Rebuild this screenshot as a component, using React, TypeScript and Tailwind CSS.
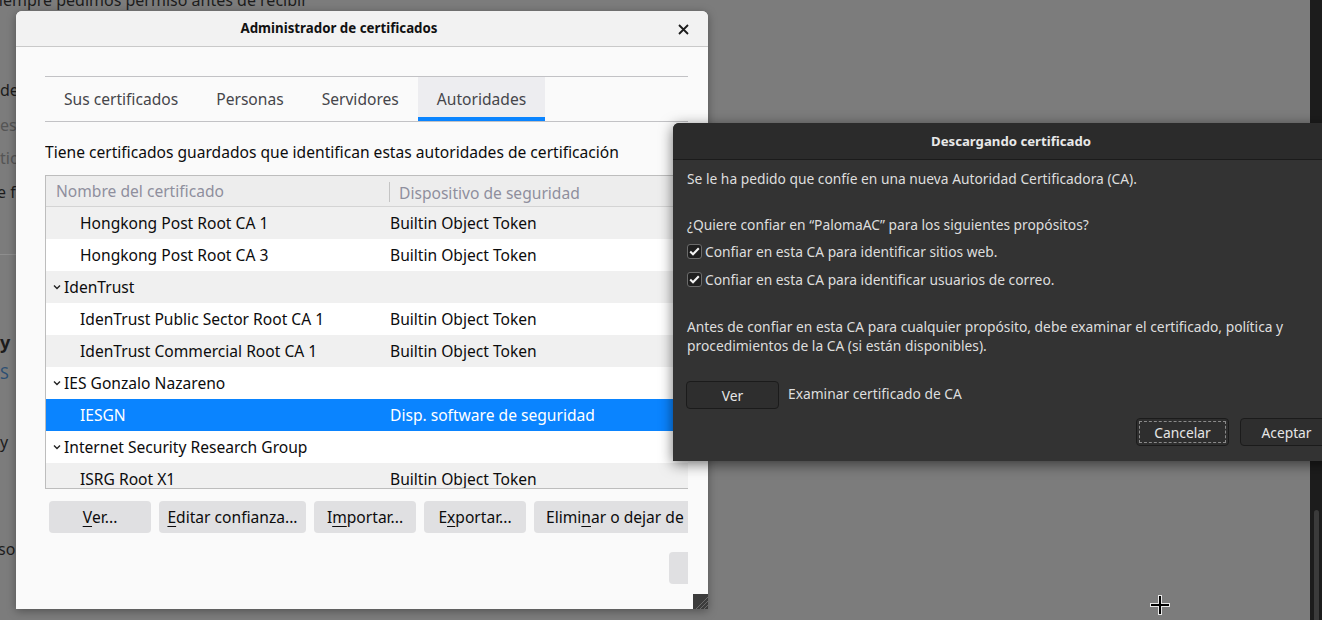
import React from 'react';

type Row = {
  name: string;
  device?: string;
  group?: boolean;
  selected?: boolean;
};

const rows: Row[] = [
  { name: 'Hongkong Post Root CA 1', device: 'Builtin Object Token' },
  { name: 'Hongkong Post Root CA 3', device: 'Builtin Object Token' },
  { name: 'IdenTrust', group: true },
  { name: 'IdenTrust Public Sector Root CA 1', device: 'Builtin Object Token' },
  { name: 'IdenTrust Commercial Root CA 1', device: 'Builtin Object Token' },
  { name: 'IES Gonzalo Nazareno', group: true },
  { name: 'IESGN', device: 'Disp. software de seguridad', selected: true },
  { name: 'Internet Security Research Group', group: true },
  { name: 'ISRG Root X1', device: 'Builtin Object Token' },
];

const tabs = ['Sus certificados', 'Personas', 'Servidores', 'Autoridades'];

function Chevron() {
  return (
    <svg width="8" height="6" viewBox="0 0 8 6" className="mr-[3px]">
      <path d="M1 1.5 L4 4.5 L7 1.5" fill="none" stroke="#222" strokeWidth="1.4" />
    </svg>
  );
}

function GrayButton({ children, className = '' }: { children: React.ReactNode; className?: string }) {
  return (
    <div
      className={`h-[32px] pt-[1px] shrink-0 rounded-[4px] bg-[#e0e0e2] flex items-center justify-center text-[#0c0c0d] whitespace-nowrap ${className}`}
    >
      {children}
    </div>
  );
}

function Check() {
  return (
    <span className="w-[15px] h-[15px] mr-[3px] rounded-[3px] bg-[#1f1f1f] border border-[#6b6b6b] flex items-center justify-center shrink-0">
      <svg width="11" height="9" viewBox="0 0 11 9">
        <path d="M1.2 4.6 L4 7.3 L9.8 1.3" fill="none" stroke="#f4f4f4" strokeWidth="2.1" />
      </svg>
    </span>
  );
}

function DarkButton({ children, focus, className = '' }: { children: React.ReactNode; focus?: boolean; className?: string }) {
  return (
    <div
      className={`h-[28px] w-[93px] shrink-0 rounded-[4px] bg-[#2e2e2e] border border-[#1b1b1b] p-[2px] ${className}`}
    >
      <div
        className={`w-full h-full flex items-center justify-center text-[#e6e6e6] ${
          focus ? 'border border-dashed border-[#8a8a8a]' : ''
        }`}
      >
        {children}
      </div>
    </div>
  );
}

export default function App() {
  return (
    <div
      className="relative w-[1322px] h-[620px] overflow-hidden bg-[#7c7c7c] flex"
      style={{ fontFamily: '"Noto Sans", "Open Sans", sans-serif' }}
    >
      {/* dimmed page behind */}
      <div className="flex-1 flex flex-col text-[16px] leading-[20px] text-[#1c1c1c]">
        <div className="-mt-[10px] -ml-[10px] whitespace-nowrap">Siempre pedimos permiso antes de recibir</div>
        <div className="mt-[70px] whitespace-nowrap">de</div>
        <div className="mt-[15px] whitespace-nowrap text-[#555]">est</div>
        <div className="mt-[13px] whitespace-nowrap text-[#555]">tio</div>
        <div className="mt-[14px] -ml-[3px] whitespace-nowrap">e fa</div>
        <div className="mt-[52px] w-[16px] border-t border-[#8e8e8e]" />
        <div className="mt-[77px] whitespace-nowrap font-bold text-[18px]">y</div>
        <div className="mt-[11px] whitespace-nowrap text-[#2c4f73]">S</div>
        <div className="mt-[49px] whitespace-nowrap">y</div>
        <div className="mt-[87px] -ml-[2px] whitespace-nowrap">so</div>
      </div>
      <div className="w-[12px] bg-[#1c1c1c] flex flex-col justify-end items-center">
        <div className="w-[5px] h-[110px] rounded-t-full bg-[#3b3b3b]" />
      </div>

      {/* Administrador de certificados */}
      <div className="absolute left-[16px] top-[11px] w-[692px] h-[598px] bg-[#fafafa] rounded-t-[6px] shadow-[0_2px_10px_rgba(0,0,0,0.35)] flex flex-col text-[15.6px] text-[#0c0c0d]">
        <div className="relative h-[36px] shrink-0 pt-[1px] pr-[46px] bg-[#f2f2f2] rounded-t-[6px] border-b border-[#c9c9c9] flex items-center justify-center">
          <span className="font-bold text-[13.3px] text-[#111]">Administrador de certificados</span>
          <svg width="11" height="11" viewBox="0 0 11 11" className="absolute right-[19px] top-[13px]">
            <path d="M1 1 L10 10 M10 1 L1 10" stroke="#1c1c1c" strokeWidth="1.8" />
          </svg>
        </div>

        <div className="ml-[29px] mt-[29px] w-[643px] flex-1 overflow-hidden">
          <div className="w-[720px]">
            {/* tabs */}
            <div className="border-t border-b border-[#c2c2c5] flex h-[46px]">
              {tabs.map((t) => {
                const active = t === 'Autoridades';
                return (
                  <div
                    key={t}
                    className={`px-[19px] h-full flex items-center whitespace-nowrap ${
                      active ? 'bg-[#ededf0] border-b-[4px] border-[#0a84ff] pt-[5px]' : 'pt-[1px]'
                    } text-[#45454a]`}
                  >
                    {t}
                  </div>
                );
              })}
            </div>

            <div className="mt-[20px] leading-[20px] whitespace-nowrap">
              Tiene certificados guardados que identifican estas autoridades de certificación
            </div>

            {/* table */}
            <div className="mt-[13px] h-[314px] w-[700px] border border-[#bdbdbd] overflow-hidden bg-white">
              <div className="h-[31px] pt-[1px] bg-[#ededed] border-b border-[#d4d4d4] flex items-center text-[#8f8f9d]">
                <div className="w-[343px] pl-[10px] whitespace-nowrap">Nombre del certificado</div>
                <div className="h-[20px] border-l border-[#c4c4c4] pl-[9px] whitespace-nowrap">Dispositivo de seguridad</div>
              </div>
              {rows.map((r, i) => (
                <div
                  key={r.name}
                  className={`h-[32px] pt-[1px] flex items-center whitespace-nowrap ${
                    r.selected ? 'bg-[#0a84ff] text-white' : i % 2 === 0 ? 'bg-[#f0f0f0]' : 'bg-white'
                  }`}
                >
                  {r.group ? (
                    <div className="pl-[7px] flex items-center">
                      <Chevron />
                      {r.name}
                    </div>
                  ) : (
                    <>
                      <div className="w-[344px] pl-[34px]">{r.name}</div>
                      <div>{r.device}</div>
                    </>
                  )}
                </div>
              ))}
            </div>

            {/* buttons */}
            <div className="mt-[12px] ml-[4px] flex gap-2">
              <GrayButton className="w-[102px]">
                <u className="underline-offset-[3px]">V</u>er...
              </GrayButton>
              <GrayButton className="w-[147px]">
                <u className="underline-offset-[3px]">E</u>ditar confianza...
              </GrayButton>
              <GrayButton className="w-[102px]">
                I<u className="underline-offset-[3px]">m</u>portar...
              </GrayButton>
              <GrayButton className="w-[102px]">
                E<u className="underline-offset-[3px]">x</u>portar...
              </GrayButton>
              <GrayButton className="px-3">
                Elimi<u className="underline-offset-[3px]">n</u>ar o dejar de confiar...
              </GrayButton>
            </div>

            <div className="mt-[19px] pl-[624px] flex">
              <GrayButton className="w-[100px]">Aceptar</GrayButton>
            </div>
          </div>
        </div>

        {/* resize grip */}
        <div className="absolute right-0 bottom-0 w-[15px] h-[15px] bg-[#3c3c3c] overflow-hidden">
          <svg width="15" height="15" viewBox="0 0 15 15">
            <path d="M15 3 L3 15 M15 7 L7 15 M15 11 L11 15" stroke="#6a6a6a" strokeWidth="1" />
          </svg>
        </div>
      </div>

      {/* Descargando certificado */}
      <div className="absolute left-[673px] top-[123px] w-[676px] h-[338px] bg-[#333333] rounded-tl-[6px] shadow-[0_3px_14px_rgba(0,0,0,0.55)] flex flex-col text-[13.8px] text-[#dedede]">
        <div className="h-[37px] shrink-0 pt-[1px] bg-[#2b2b2b] rounded-tl-[6px] border-b border-[#1b1b1b] flex items-center justify-center">
          <span className="font-bold text-[13.2px] text-[#e8e8e8]">Descargando certificado</span>
        </div>
        <div className="pl-[14px] flex flex-col leading-[19px]">
          <div className="mt-[9px] whitespace-nowrap">
            Se le ha pedido que confíe en una nueva Autoridad Certificadora (CA).
          </div>
          <div className="mt-[27px] whitespace-nowrap">
            ¿Quiere confiar en “PalomaAC” para los siguientes propósitos?
          </div>
          <div className="mt-[8px] flex items-center whitespace-nowrap">
            <Check />
            Confiar en esta CA para identificar sitios web.
          </div>
          <div className="mt-[9px] flex items-center whitespace-nowrap">
            <Check />
            Confiar en esta CA para identificar usuarios de correo.
          </div>
          <div className="mt-[28px] whitespace-nowrap">
            Antes de confiar en esta CA para cualquier propósito, debe examinar el certificado, política y
            <br />
            procedimientos de la CA (si están disponibles).
          </div>
          <div className="mt-[26px] -ml-[1px] flex items-center">
            <DarkButton>Ver</DarkButton>
            <span className="ml-[9px] -mt-[3px] whitespace-nowrap">Examinar certificado de CA</span>
          </div>
          <div className="mt-[9px] pl-[449px] flex gap-[11px]">
            <DarkButton focus>Cancelar</DarkButton>
            <DarkButton>Aceptar</DarkButton>
          </div>
        </div>
      </div>

      {/* crosshair cursor */}
      <svg width="22" height="22" viewBox="0 0 22 22" className="absolute left-[1149px] top-[594px]">
        <path d="M11 1 V21 M1 11 H21" stroke="#e8e8e8" strokeWidth="4" />
        <path d="M11 2 V20 M2 11 H20" stroke="#000" strokeWidth="2" />
      </svg>
    </div>
  );
}
